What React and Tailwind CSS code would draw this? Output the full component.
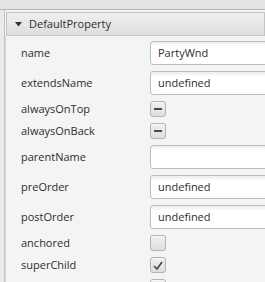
import React from 'react';

const rows = [
  { label: 'name', type: 'text', value: 'PartyWnd' },
  { label: 'extendsName', type: 'text', value: 'undefined' },
  { label: 'alwaysOnTop', type: 'check', state: 'mixed' },
  { label: 'alwaysOnBack', type: 'check', state: 'mixed' },
  { label: 'parentName', type: 'text', value: '' },
  { label: 'preOrder', type: 'text', value: 'undefined' },
  { label: 'postOrder', type: 'text', value: 'undefined' },
  { label: 'anchored', type: 'check', state: 'off' },
  { label: 'superChild', type: 'check', state: 'on' },
  { label: '', type: 'check', state: 'off' },
];

function TextBox({ value }) {
  return (
    <div className="h-[24px] w-[140px] shrink-0 rounded-[3px] border border-[#bdbdbd] bg-gradient-to-b from-[#ececec] from-0% to-white to-[22%] px-[7px] flex items-center text-[#2e2e2e]">
      {value}
    </div>
  );
}

function CheckBox({ state }) {
  return (
    <div className="h-[16px] w-[16px] shrink-0 rounded-[3px] border border-[#b3b3b3] bg-gradient-to-b from-[#f0f0f0] to-[#dedede] flex items-center justify-center shadow-[inset_0_1px_0_#fafafa]">
      {state === 'mixed' && <div className="h-[2px] w-[8px] bg-[#4a4a4a]" />}
      {state === 'on' && (
        <svg width="10" height="9" viewBox="0 0 10 9">
          <path d="M1 5 L4 8 L9 1" fill="none" stroke="#444" strokeWidth="1.6" />
        </svg>
      )}
    </div>
  );
}

export default function App() {
  return (
    <div
      className="w-[265px] h-[282px] overflow-hidden bg-[#f4f4f4] flex flex-col text-[11px] leading-[16px] text-[#2e2e2e]"
      style={{ fontFamily: '"Open Sans", "Noto Sans", sans-serif' }}
    >
      <div className="h-[10px] shrink-0 bg-[#e3e3e3] border-b border-[#b8b8b8]" />
      <div className="flex flex-1 min-h-0">
        <div className="w-[4px] shrink-0 bg-[#ebebeb]" />
        <div className="w-px shrink-0 bg-[#c2c2c2]" />
        <div className="flex-1 min-w-0 flex flex-col pl-px">
          <div className="mt-[2px] h-[24px] shrink-0 flex items-center border border-[#c4c4c4] bg-gradient-to-b from-[#efefef] to-[#dedede]">
            <svg width="7" height="5" viewBox="0 0 7 5" className="ml-[8px] mr-[7px] shrink-0">
              <path d="M0 0 H7 L3.5 4.5 Z" fill="#333" />
            </svg>
            <span>DefaultProperty</span>
          </div>
          <div className="flex flex-col gap-[6px] pt-[5px] border-l border-[#d6d6d6] -ml-px">
            {rows.map((r, i) => (
              <div key={i} className="flex items-center">
                <div className="w-[144px] shrink-0 pl-[15px]">{r.label}</div>
                {r.type === 'text' ? <TextBox value={r.value} /> : <CheckBox state={r.state} />}
              </div>
            ))}
          </div>
        </div>
      </div>
    </div>
  );
}
